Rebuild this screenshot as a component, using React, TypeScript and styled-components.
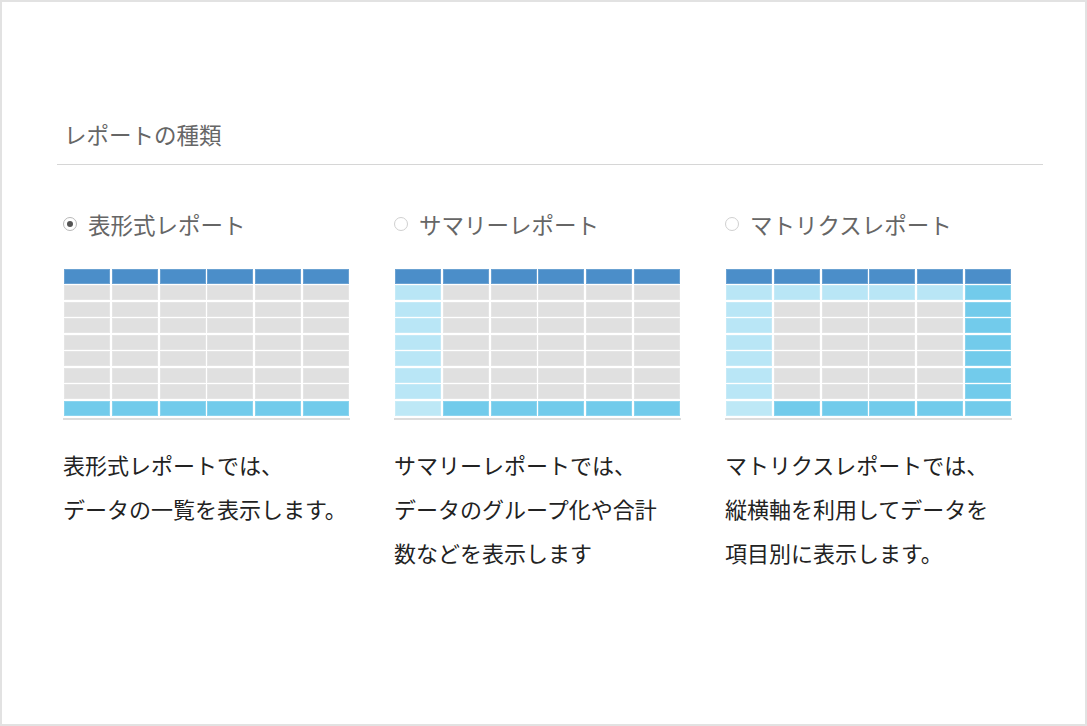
import styled, { createGlobalStyle } from "styled-components"

type CellKind = "head" | "body" | "side" | "total" | "corner"

interface ReportType {
    label: string
    checked: boolean
    lines: string[]
    matrix: CellKind[][]
}

const COLS = 6
const BODY_ROWS = 7

function buildTabular(): CellKind[][] {
    const rows: CellKind[][] = []
    rows.push(Array(COLS).fill("head"))
    for (let i = 0; i < BODY_ROWS; i++) rows.push(Array(COLS).fill("body"))
    rows.push(Array(COLS).fill("total"))
    return rows
}

function buildSummary(): CellKind[][] {
    const rows: CellKind[][] = []
    rows.push(Array(COLS).fill("head"))
    for (let i = 0; i < BODY_ROWS; i++) rows.push(["side", ...Array(COLS - 1).fill("body")])
    rows.push(["corner", ...Array(COLS - 1).fill("total")])
    return rows
}

function buildMatrix(): CellKind[][] {
    const rows: CellKind[][] = []
    rows.push(Array(COLS).fill("head"))
    rows.push([...Array(COLS - 1).fill("side"), "total"])
    for (let i = 1; i < BODY_ROWS; i++) rows.push(["side", ...Array(COLS - 2).fill("body"), "total"])
    rows.push(["corner", ...Array(COLS - 1).fill("total")])
    return rows
}

const reports: ReportType[] = [
    {
        label: "表形式レポート",
        checked: true,
        lines: ["表形式レポートでは、", "データの一覧を表示します。"],
        matrix: buildTabular(),
    },
    {
        label: "サマリーレポート",
        checked: false,
        lines: ["サマリーレポートでは、", "データのグループ化や合計", "数などを表示します"],
        matrix: buildSummary(),
    },
    {
        label: "マトリクスレポート",
        checked: false,
        lines: ["マトリクスレポートでは、", "縦横軸を利用してデータを", "項目別に表示します。"],
        matrix: buildMatrix(),
    },
]

const cellColors: Record<CellKind, string> = {
    head: "#4b8ec9",
    body: "#e0e0e0",
    side: "#b9e6f6",
    total: "#72cbeb",
    corner: "#bde8f6",
}

export default function App() {
    return (
        <>
            <GlobalStyle />
            <Card>
                <Heading>レポートの種類</Heading>
                <Options>
                    {reports.map(report => (
                        <Option key={report.label}>
                            <RadioLabel>
                                <Radio $checked={report.checked} />
                                <span>{report.label}</span>
                            </RadioLabel>
                            <TableFrame>
                                <Grid>
                                    {report.matrix.flatMap((row, r) =>
                                        row.map((kind, c) => <Cell key={`${r}-${c}`} $kind={kind} />)
                                    )}
                                </Grid>
                            </TableFrame>
                            <Description>
                                {report.lines.map(line => (
                                    <div key={line}>{line}</div>
                                ))}
                            </Description>
                        </Option>
                    ))}
                </Options>
            </Card>
        </>
    )
}

const GlobalStyle = createGlobalStyle`
    html, body {
        margin: 0;
        padding: 0;
        background: #fff;
    }
    body {
        font-family: "Noto Sans CJK JP", "Noto Sans", sans-serif;
    }
    * {
        box-sizing: border-box;
    }
`

const Card = styled.div`
    width: 1087px;
    height: 726px;
    border: 2px solid #e2e2e2;
    padding: 116px 42px 0 55px;
    background: #fff;
`

const Heading = styled.h2`
    margin: 0;
    padding: 0 0 14px 7px;
    font-size: 22.5px;
    line-height: 32px;
    font-weight: 400;
    color: #666;
    border-bottom: 1px solid #d6d6d6;
`

const Options = styled.div`
    display: grid;
    grid-template-columns: repeat(3, 331px);
    padding: 43px 0 0 6px;
`

const Option = styled.div`
    display: flex;
    flex-direction: column;
`

const RadioLabel = styled.label`
    display: flex;
    align-items: center;
    gap: 11px;
    height: 32px;
    font-size: 22.5px;
    line-height: 32px;
    color: #666;
`

const Radio = styled.span<{ $checked: boolean }>`
    width: 14px;
    height: 14px;
    border-radius: 50%;
    border: 1px solid ${p => (p.$checked ? "#b8b8b8" : "#d0d0d0")};
    display: flex;
    align-items: center;
    justify-content: center;
    margin-top: -1px;

    &::after {
        content: "";
        width: 6px;
        height: 6px;
        border-radius: 50%;
        background: #555;
        display: ${p => (p.$checked ? "block" : "none")};
    }
`

const TableFrame = styled.div`
    width: 287px;
    margin-top: 29px;
    padding: 0 1px 2px 1px;
    border-bottom: 2px solid #dcdcdc;
`

const Grid = styled.div`
    display: grid;
    grid-template-columns: repeat(6, 1fr);
    grid-auto-rows: 14.8px;
    gap: 1.7px;
    width: 285px;
`

const Cell = styled.div<{ $kind: CellKind }>`
    background: ${p => cellColors[p.$kind]};
    box-shadow: inset 0 0 0 1px rgba(255, 255, 255, 0.18);
`

const Description = styled.div`
    margin-top: 22px;
    font-size: 22px;
    line-height: 44px;
    color: #222;
    white-space: nowrap;
`
